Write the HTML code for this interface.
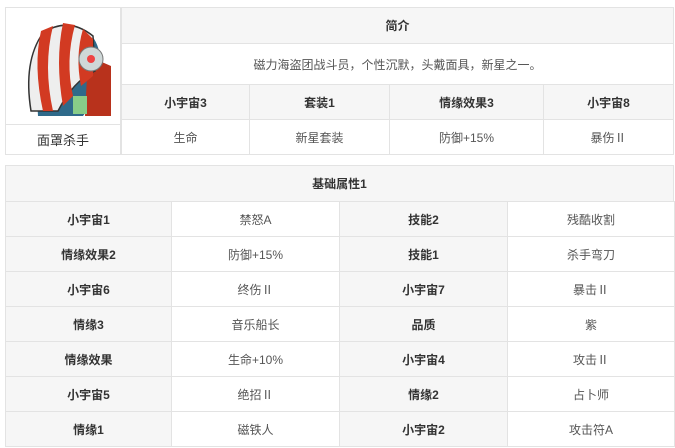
<!DOCTYPE html>
<html><head><meta charset="utf-8"><style>
body{margin:0;width:675px;height:448px;background:#fff;font-family:"Liberation Sans","Noto Sans CJK SC",sans-serif;font-size:12px;color:#333;overflow:hidden;position:relative}
.c{position:absolute;box-sizing:border-box;border:1px solid #e3e3e3;display:flex;align-items:center;justify-content:center}
.g{background:#f6f6f6;font-weight:bold;color:#333}
.w{background:#fff;color:#555}
</style></head><body>
<div class="c w" style="left:5px;top:7px;width:116px;height:118px"><svg width="100" height="110" viewBox="0 0 100 110">
<path d="M25 105 L22 50 Q20 18 50 14 Q80 14 86 40 L88 80 L70 105Z" fill="#2f6a8a"/>
<path d="M75 45 L98 55 L98 105 L72 105Z" fill="#b8321c"/>
<path d="M18 100 Q10 50 30 22 Q55 5 80 25 L82 60 Q60 70 45 100Z" fill="#eee" stroke="#333" stroke-width="1.5"/>
<path d="M28 20 Q20 55 30 100 L40 100 Q30 55 40 15Z" fill="#d23a22"/>
<path d="M50 12 Q42 50 50 95 L60 85 Q52 50 62 14Z" fill="#d23a22"/>
<path d="M70 18 Q62 45 68 75 L80 65 L80 28Z" fill="#d23a22"/>
<circle cx="78" cy="48" r="12" fill="#cfd8d8" stroke="#777"/>
<circle cx="78" cy="48" r="4" fill="#e44"/>
<rect x="60" y="85" width="14" height="18" fill="#8c8"/>
</svg></div>
<div class="c w" style="left:5px;top:124px;width:116px;height:31px;color:#333;font-size:13px">面罩杀手</div>
<div class="c g" style="left:121px;top:7px;width:553px;height:37px">简介</div>
<div class="c w" style="left:121px;top:43px;width:553px;height:42px">磁力海盗团战斗员，个性沉默，头戴面具，新星之一。</div>
<div class="c g" style="left:121px;top:84px;width:129px;height:36px">小宇宙3</div>
<div class="c g" style="left:249px;top:84px;width:141px;height:36px">套装1</div>
<div class="c g" style="left:389px;top:84px;width:155px;height:36px">情缘效果3</div>
<div class="c g" style="left:543px;top:84px;width:131px;height:36px">小宇宙8</div>
<div class="c w" style="left:121px;top:119px;width:129px;height:36px">生命</div>
<div class="c w" style="left:249px;top:119px;width:141px;height:36px">新星套装</div>
<div class="c w" style="left:389px;top:119px;width:155px;height:36px">防御+15%</div>
<div class="c w" style="left:543px;top:119px;width:131px;height:36px">暴伤Ⅱ</div>
<div class="c g" style="left:5px;top:165px;width:669px;height:37px">基础属性1</div>
<div id="rows"></div>
<script>
var d=[["小宇宙1","禁怒A","技能2","残酷收割"],["情缘效果2","防御+15%","技能1","杀手弯刀"],["小宇宙6","终伤Ⅱ","小宇宙7","暴击Ⅱ"],["情缘3","音乐船长","品质","紫"],["情缘效果","生命+10%","小宇宙4","攻击Ⅱ"],["小宇宙5","绝招Ⅱ","情缘2","占卜师"],["情缘1","磁铁人","小宇宙2","攻击符A"]];
var xs=[5,171,339,507,674],h="";
d.forEach(function(r,i){var y=201+i*35;r.forEach(function(t,j){h+='<div class="c '+(j%2?'w':'g')+'" style="left:'+xs[j]+'px;top:'+y+'px;width:'+(xs[j+1]-xs[j]+1)+'px;height:36px">'+t+'</div>';});});
document.getElementById("rows").innerHTML=h;
</script>
</body></html>
